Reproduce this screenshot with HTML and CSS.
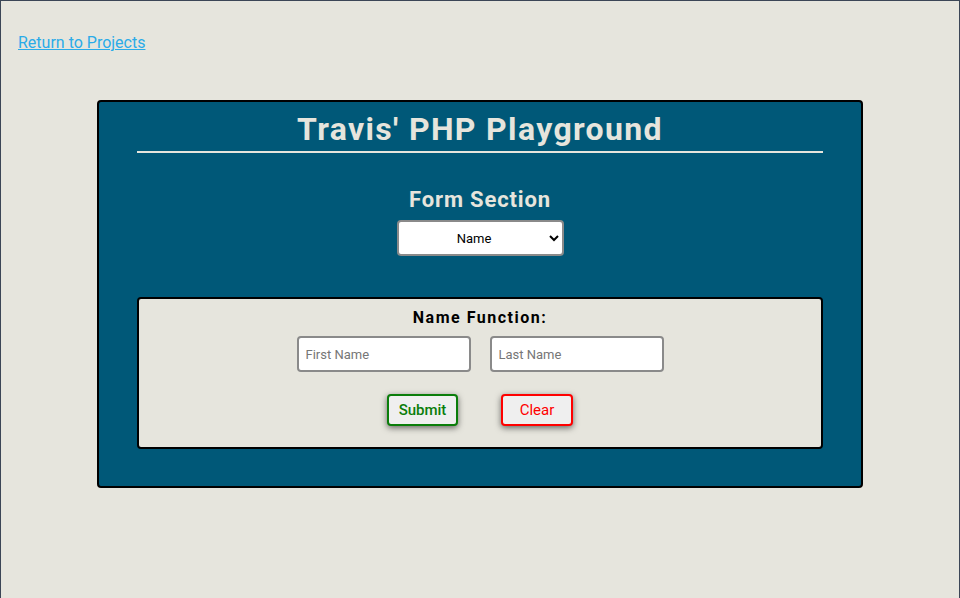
FILE: index.html
```html
<!DOCTYPE html>
<html>
<head>
<meta charset="utf-8">
<link rel="stylesheet" href="styles.css">
</head>
<body>
<div class="page">
  <a class="back" href="#">Return to Projects</a>
  <main class="card">
    <h1 class="title">Travis' PHP Playground</h1>
    <div class="rule"></div>
    <h2 class="section-title">Form Section</h2>
    <div class="select-wrap">
      <select class="section-select">
        <option>Name</option>
      </select>
    </div>
    <section class="panel">
      <h3 class="panel-title">Name Function:</h3>
      <div class="inputs">
        <input class="field" type="text" placeholder="First Name">
        <input class="field" type="text" placeholder="Last Name">
      </div>
      <div class="buttons">
        <button class="btn btn-submit">Submit</button>
        <button class="btn btn-clear">Clear</button>
      </div>
    </section>
  </main>
</div>
</body>
</html>
```
FILE: styles.css
```css
html, body {
  margin: 0;
  padding: 0;
}
body {
  background: #e6e5dd;
  font-family: Roboto, "Liberation Sans", sans-serif;
}
.page {
  box-sizing: border-box;
  min-height: 100vh;
  border: 1px solid #3b4656;
  border-bottom: none;
  padding: 32px 0 0 17px;
}
.back {
  display: inline-block;
  color: #2aabe8;
  font-size: 16px;
  line-height: 19px;
  text-decoration: underline;
}
.card {
  box-sizing: border-box;
  width: 766px;
  margin: 48px 0 0 79px;
  background: #005878;
  border: 2px solid #000;
  border-radius: 4px;
  padding: 8px 0 37px;
  display: flex;
  flex-direction: column;
  align-items: center;
}
.title {
  margin: 0;
  font-size: 32px;
  line-height: 38px;
  font-weight: 700;
  color: #e6e5dd;
  letter-spacing: 1.35px;
}
.rule {
  width: 686px;
  height: 2px;
  background: #e6e5dd;
  margin-top: 3px;
}
.section-title {
  margin: 34px 0 0;
  font-size: 22px;
  line-height: 26px;
  font-weight: 700;
  color: #e6e5dd;
  letter-spacing: 0.85px;
}
.select-wrap {
  margin-top: 7px;
}
.section-select {
  box-sizing: border-box;
  width: 167px;
  height: 36px;
  border: 2px solid #8a8a8a;
  border-radius: 4px;
  background: #fff;
  font-family: Roboto, "Liberation Sans", sans-serif;
  font-size: 13px;
  text-align: center;
  text-align-last: center;
  color: #000;
}
.panel {
  box-sizing: border-box;
  width: 686px;
  margin-top: 41px;
  background: #e6e5dd;
  border: 2px solid #000;
  border-radius: 4px;
  padding: 9px 0 21px;
  display: flex;
  flex-direction: column;
  align-items: center;
}
.panel-title {
  margin: 0;
  font-size: 16px;
  line-height: 19px;
  font-weight: 700;
  letter-spacing: 1.5px;
  color: #000;
}
.inputs {
  display: flex;
  gap: 19px;
  margin-top: 9px;
}
.field {
  box-sizing: border-box;
  width: 174px;
  height: 36px;
  border: 2px solid #8a8a8a;
  border-radius: 4px;
  background: #fff;
  padding: 0 7px;
  font-family: Roboto, "Liberation Sans", sans-serif;
  font-size: 13px;
}
.field::placeholder {
  color: #767676;
}
.buttons {
  display: flex;
  gap: 43px;
  margin-top: 22px;
}
.btn {
  box-sizing: border-box;
  height: 32px;
  border-radius: 4px;
  background: #efefef;
  font-family: Roboto, "Liberation Sans", sans-serif;
  font-size: 15px;
  font-weight: 500;
  box-shadow: 0 2px 6px rgba(0, 0, 0, 0.55);
  padding: 0;
}
.btn-submit {
  width: 71px;
  border: 2px solid #0a7d0a;
  color: #0a7d0a;
}
.btn-clear {
  width: 72px;
  border: 2px solid #ff0000;
  color: #ff0000;
  font-weight: 400;
}
```
